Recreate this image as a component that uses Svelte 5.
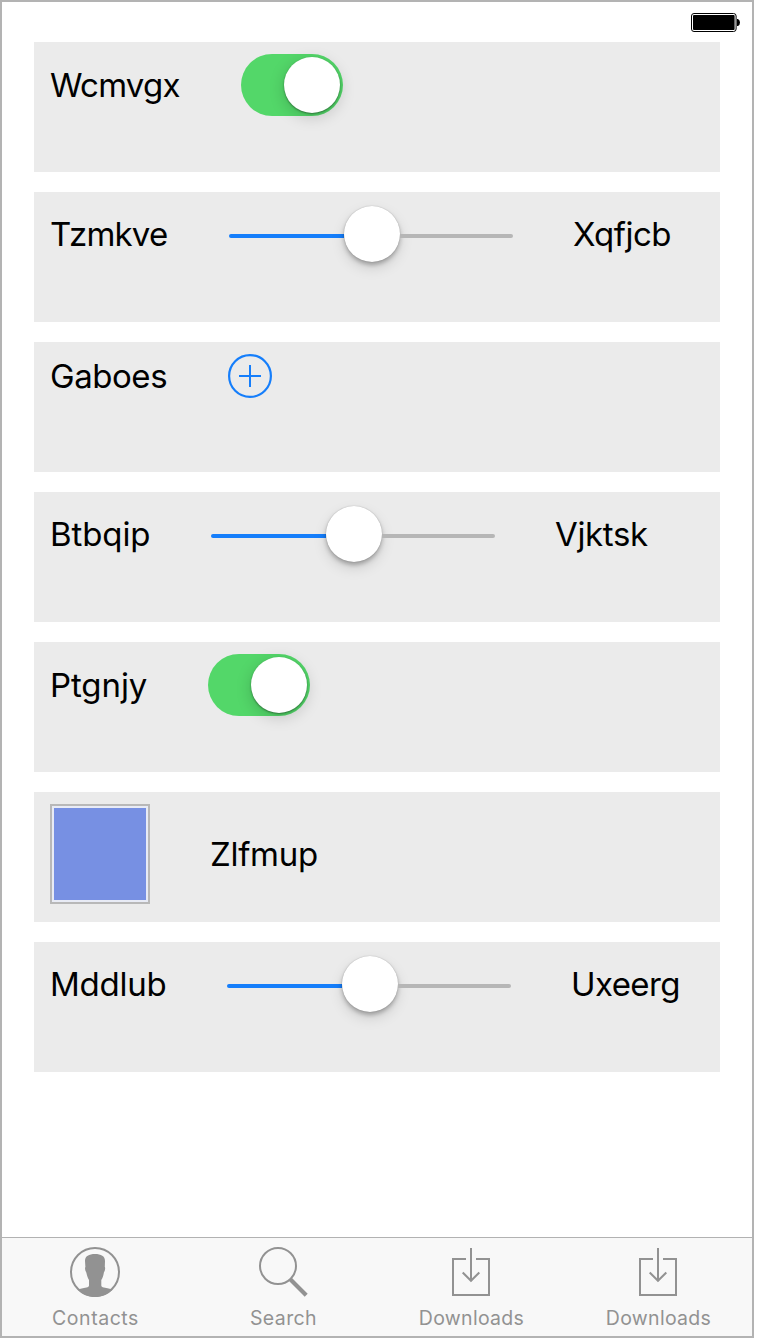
<script>
  const rows = [
    { kind: 'switch', label: 'Wcmvgx', width: 131, spacing: -0.75 },
    { kind: 'slider', label: 'Tzmkve', width: 119, spacing: -0.8, value: 'Xqfjcb', valueSpacing: -0.5 },
    { kind: 'add', label: 'Gaboes', width: 118, spacing: -0.45 },
    { kind: 'slider', label: 'Btbqip', width: 101, spacing: -0.1, value: 'Vjktsk', valueSpacing: -0.35 },
    { kind: 'switch', label: 'Ptgnjy', width: 98, spacing: -0.1 },
    { kind: 'swatch', label: 'Zlfmup', width: 110, spacing: -0.3 },
    { kind: 'slider', label: 'Mddlub', width: 117, spacing: -0.25, value: 'Uxeerg', valueSpacing: -0.6 }
  ];
  const tabs = [
    { icon: 'contacts', label: 'Contacts', spacing: 0.55 },
    { icon: 'search', label: 'Search', spacing: 0.4 },
    { icon: 'download', label: 'Downloads', spacing: 0.3 },
    { icon: 'download', label: 'Downloads', spacing: 0.3 }
  ];
</script>

<div class="phone">
  <header>
    <svg width="50" height="20" viewBox="0 0 50 20">
      <rect x="0.5" y="0.5" width="44.6" height="18" rx="2.5" fill="#fff" stroke="#000" />
      <rect x="2" y="2" width="41.6" height="15" rx="1" />
      <path d="M46 6h1q2 1.2 2 3.5t-2 3.5h-1z" />
    </svg>
  </header>

  <main>
    {#each rows as row}
      <section>
        {#if row.kind === 'swatch'}<div class="swatch"></div>{/if}
        <span class="label" style="width:{row.width}px;letter-spacing:{row.spacing}px">{row.label}</span>
        {#if row.kind === 'switch'}
          <div class="switch"><div class="knob"></div></div>
        {:else if row.kind === 'slider'}
          <div class="slider">
            <div class="fill"></div>
            <div class="thumb"></div>
            <div class="rest"></div>
          </div>
          <span class="label" style="letter-spacing:{row.valueSpacing}px">{row.value}</span>
        {:else if row.kind === 'add'}
          <svg width="44" height="44" viewBox="0 0 44 44" fill="none" stroke="#157efb" stroke-width="2">
            <circle cx="22" cy="22" r="20.9" stroke-width="2.2" />
            <path d="M22 11v22M11 22h22" />
          </svg>
        {/if}
      </section>
    {/each}
  </main>

  <nav>
    {#each tabs as tab}
      <div class="tab">
        <svg width="50" height="50" viewBox="0 0 50 50" fill="none" stroke="#929292" stroke-width="2">
          {#if tab.icon === 'contacts'}
            <circle cx="25" cy="25" r="24" />
            <path fill="#929292" stroke="none" d="M25 7c6 0 10 2 10 7l-.2 6c.8 1 .2 4-.9 5.500-.5 3-1.300 5.500-2.600 7.500v5.500c0 1 1 1.700 2.500 2.100 3.500.9 6.500 1 8.500 2.400C37.500 47.500 31.500 50 25 50S12.500 47.500 8 43c2-1.400 5-1.500 8.500-2.400 1.500-.4 2.500-1.100 2.500-2.100V33c-1.200-2-2-4.500-2.700-7.500-1.100-1.500-1.700-4.500-.9-5.500L15 14c0-5 4-7 10-7z" />
          {:else if tab.icon === 'search'}
            <circle cx="20" cy="19" r="18" />
            <path stroke-width="4.2" d="M32.500 32.500 48.200 48.200" />
          {:else}
            <path d="M20 12H7v36h36V12H30M25 1v33M16.700 25.500l8.300 8.300 8.300-8.300" />
          {/if}
        </svg>
        <span style="letter-spacing:{tab.spacing}px">{tab.label}</span>
      </div>
    {/each}
  </nav>
</div>

<style>
  :global(body) { margin: 0; background: #fff; }
  .phone {
    box-sizing: border-box;
    width: 754px;
    height: 1338px;
    border: 2px solid #b3b3b3;
    display: flex;
    flex-direction: column;
    font-family: Inter, "Liberation Sans", sans-serif;
    background: #fff;
  }
  header {
    box-sizing: border-box;
    height: 40px;
    padding: 11px 11px 0 0;
    display: flex;
    justify-content: flex-end;
  }
  svg { display: block; flex: none; }
  main {
    flex: 1;
    padding: 0 32px;
    display: flex;
    flex-direction: column;
    gap: 20px;
  }
  section {
    box-sizing: border-box;
    height: 130px;
    padding: 12px 16px;
    background: #ebebeb;
    display: flex;
    align-items: center;
    align-content: flex-start;
    flex-wrap: wrap;
    column-gap: 60px;
  }
  .label {
    flex: none;
    font-size: 33px;
    line-height: 40px;
    white-space: nowrap;
    color: #000;
  }
  .switch {
    box-sizing: border-box;
    width: 102px;
    height: 62px;
    padding: 3px;
    border-radius: 31px;
    background: #53d769;
    display: flex;
    justify-content: flex-end;
  }
  .knob, .thumb {
    width: 56px;
    height: 56px;
    border-radius: 50%;
    background: #fff;
    flex: none;
  }
  .knob { box-shadow: 0 1px 2px rgba(0, 0, 0, .4), 0 4px 16px rgba(0, 0, 0, .18); }
  .thumb { box-shadow: 0 0 1px rgba(0, 0, 0, .3), 0 3px 4px rgba(0, 0, 0, .25), 0 6px 14px rgba(0, 0, 0, .13); }
  .slider {
    width: 284px;
    height: 60px;
    display: flex;
    align-items: center;
  }
  .fill, .rest { flex: none; height: 4px; margin-top: 4px; }
  .fill { width: 115px; background: #157efb; border-radius: 2px 0 0 2px; }
  .rest { width: 113px; background: #b6b6b6; border-radius: 0 2px 2px 0; }
  .swatch {
    box-sizing: border-box;
    width: 100px;
    height: 100px;
    border: 2px solid #b8b8b8;
    padding: 2px;
    background: #7790e3 content-box;
    box-shadow: inset 0 0 0 2px #e8ebf5;
  }
  nav {
    height: 98px;
    border-top: 1px solid #b2b2b2;
    background: #f8f8f8;
    display: grid;
    grid-template-columns: 186px 190px 186px 188px;
  }
  .tab {
    display: flex;
    flex-direction: column;
    align-items: center;
    padding-top: 9px;
  }
  .tab span {
    margin-top: 9px;
    padding-left: 1px;
    font-size: 19.5px;
    line-height: 24px;
    color: #929292;
  }
</style>
